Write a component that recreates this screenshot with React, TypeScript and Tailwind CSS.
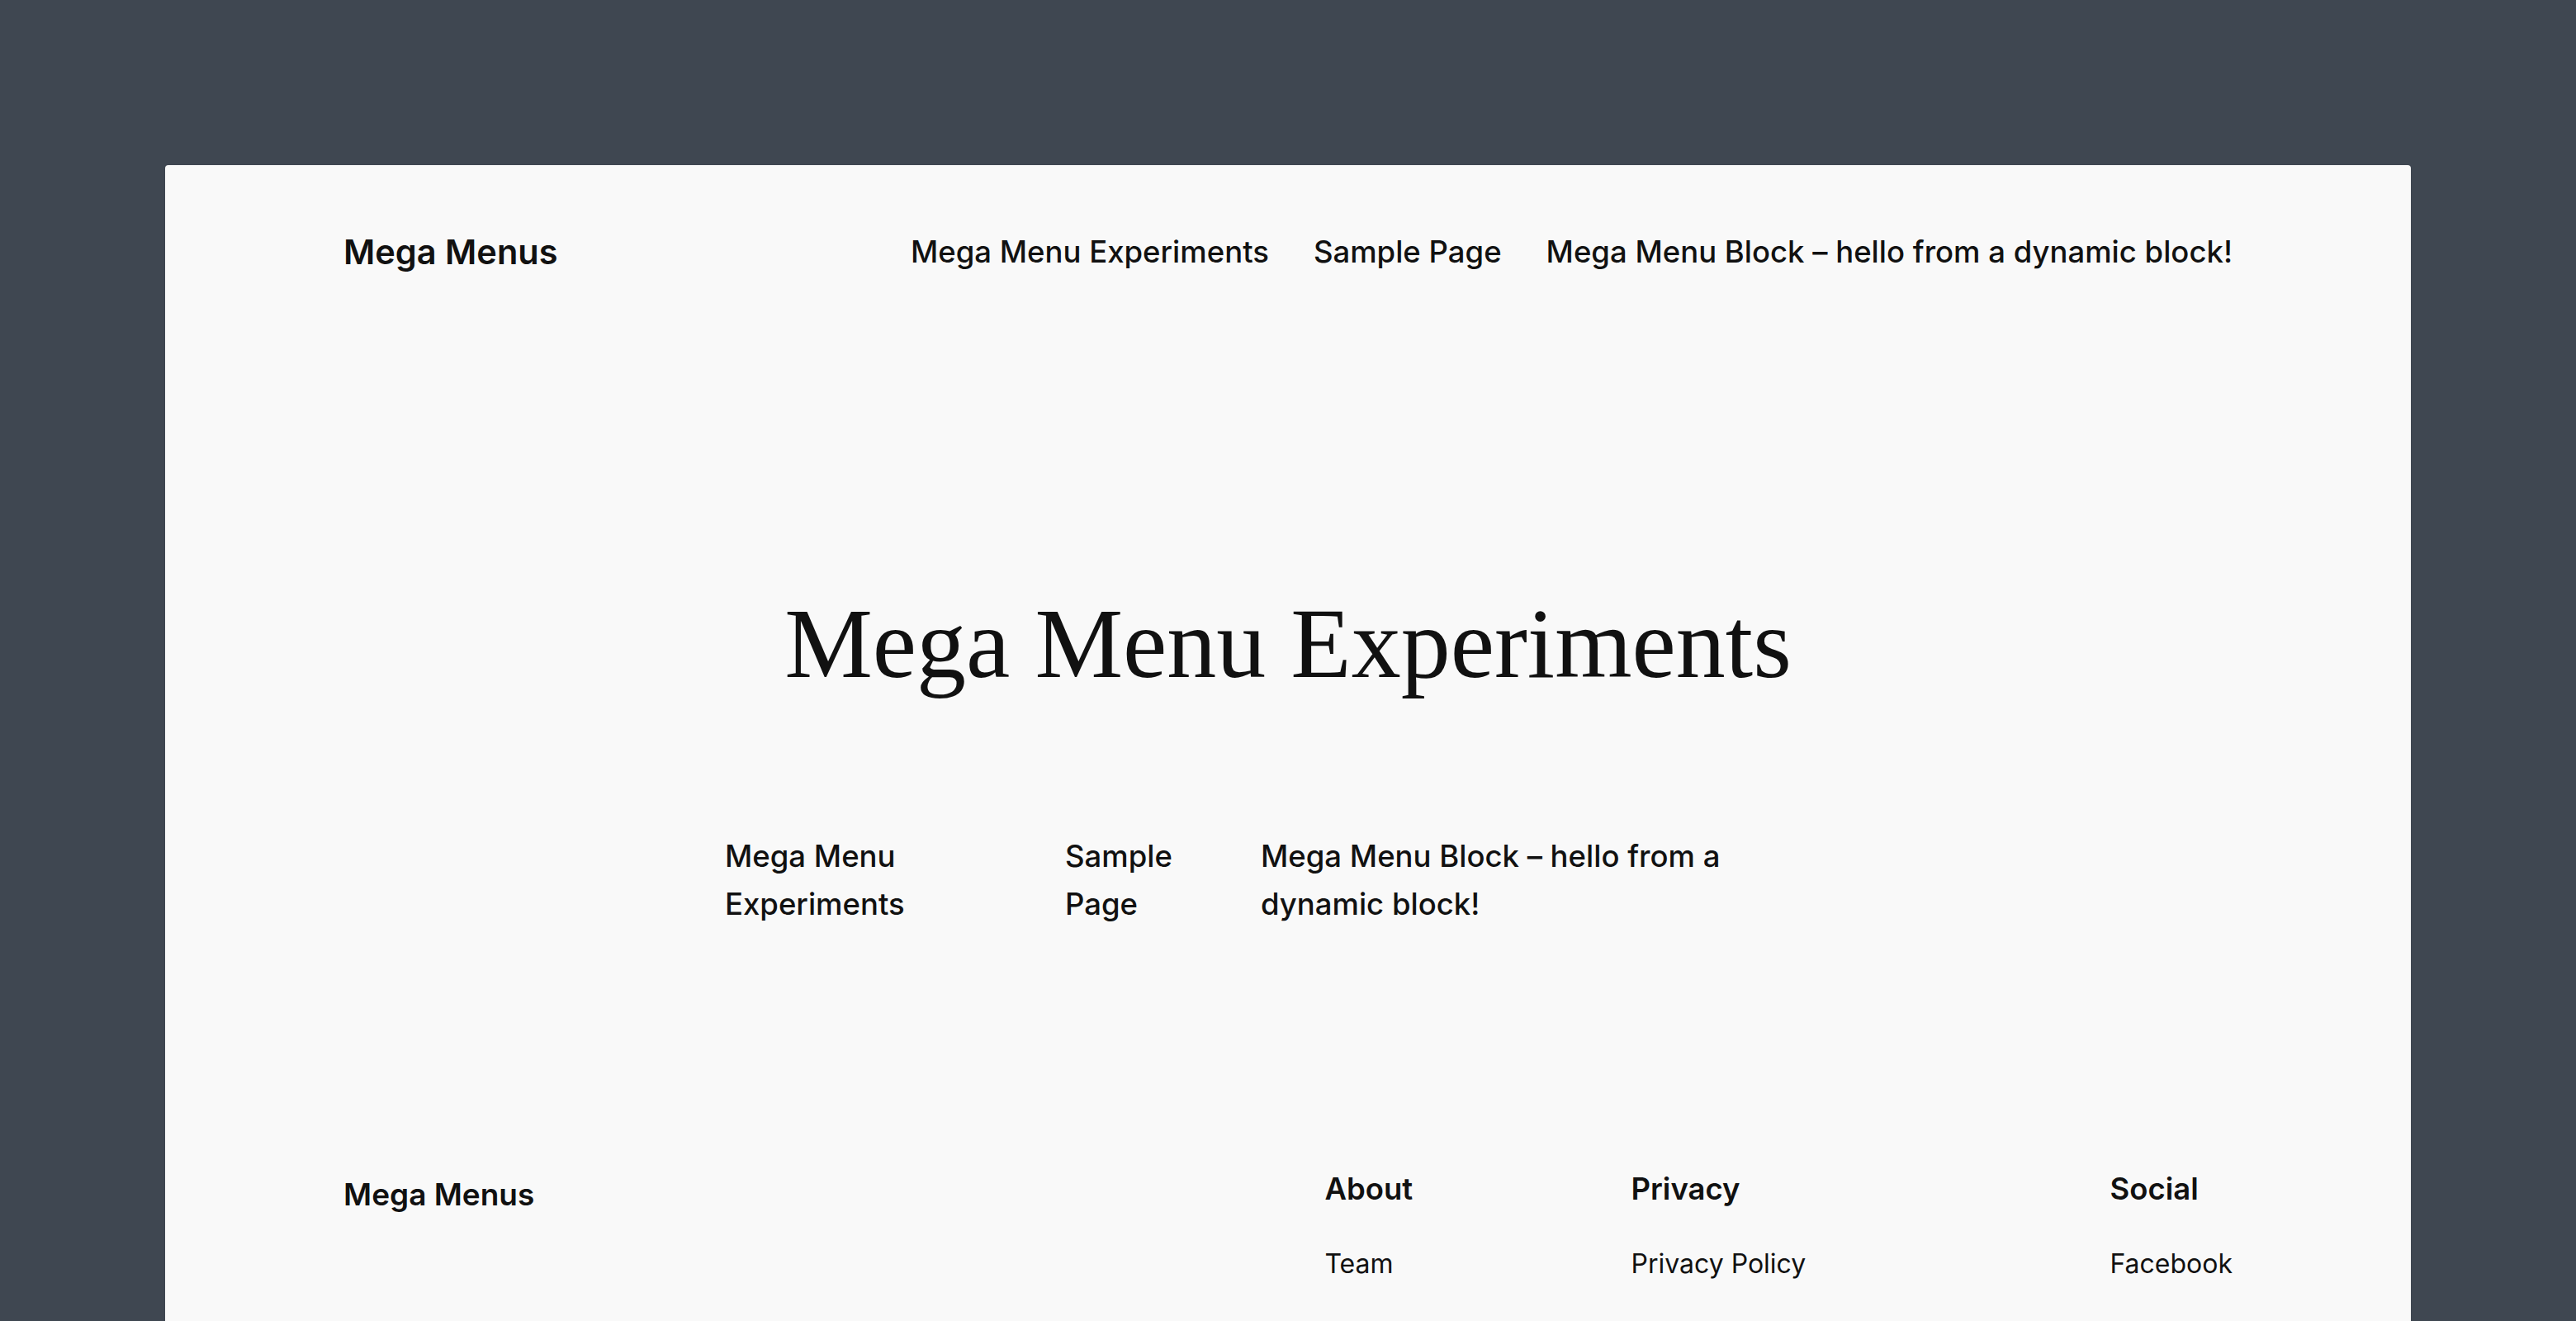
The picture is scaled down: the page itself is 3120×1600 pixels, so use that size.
import React from 'react';

const navItems = [
    'Mega Menu Experiments',
    'Sample Page',
    'Mega Menu Block – hello from a dynamic block!',
];

const pageNav = [
    { label: 'Mega Menu Experiments', width: 'w-[372px]' },
    { label: 'Sample Page', width: 'w-[197px]' },
    { label: 'Mega Menu Block – hello from a dynamic block!', width: 'w-[690px]' },
];

const footerColumns = [
    { title: 'About', links: ['Team'], width: 'w-[371px]' },
    { title: 'Privacy', links: ['Privacy Policy'], width: 'w-[580px]' },
    { title: 'Social', links: ['Facebook'], width: '' },
];

const App: React.FC = () => {
    return (
        <div className="h-[1600px] overflow-hidden bg-[#3f4751] px-[200px] pt-[200px] font-['Inter','Liberation_Sans',sans-serif] text-[#111111]">
            <div className="h-[1400px] overflow-hidden rounded-t-[4px] bg-[#f9f9f9] px-[216px]">
                {/* Header */}
                <header className="flex h-[212px] items-center justify-between">
                    <div className="text-[41.5px] font-semibold leading-[1.2]">Mega Menus</div>
                    <nav className="flex items-center gap-[54px] text-[36.5px] font-medium leading-[1.2]">
                        {navItems.map((item) => (
                            <a key={item} className="whitespace-nowrap">
                                {item}
                            </a>
                        ))}
                    </nav>
                </header>

                {/* Title */}
                <h1 className="mt-[296px] text-center font-['Liberation_Serif','DejaVu_Serif',serif] text-[120px] font-normal leading-[1.2]">
                    Mega Menu Experiments
                </h1>

                {/* Page navigation */}
                <div className="mx-auto mt-[156px] flex w-[1364px] gap-[40px] text-[36.5px] font-medium leading-[1.6]">
                    {pageNav.map((item) => (
                        <a key={item.label} className={`shrink-0 ${item.width}`}>
                            {item.label}
                        </a>
                    ))}
                </div>

                {/* Footer */}
                <footer className="mt-[294px] flex items-start justify-between">
                    <div className="mt-[6px] text-[37px] font-semibold leading-[1.2]">Mega Menus</div>
                    <div className="flex">
                        {footerColumns.map((col) => (
                            <div key={col.title} className={col.width}>
                                <h2 className="text-[36.5px] font-semibold leading-[1.2]">{col.title}</h2>
                                <ul className="mt-[42px] text-[32px] leading-[1.6]">
                                    {col.links.map((link) => (
                                        <li key={link}>{link}</li>
                                    ))}
                                </ul>
                            </div>
                        ))}
                    </div>
                </footer>
            </div>
        </div>
    );
};

export default App;
